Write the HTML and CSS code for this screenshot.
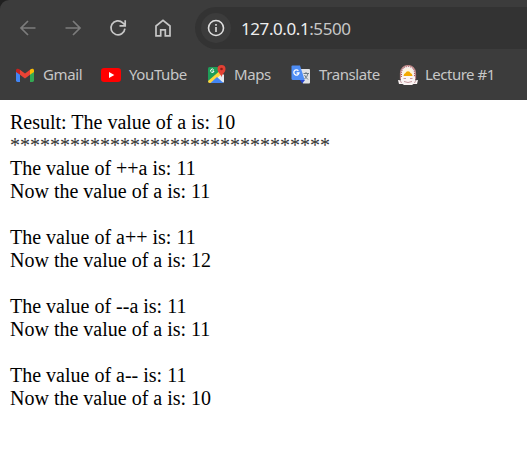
FILE: index.html
```html
<!DOCTYPE html>
<html lang="en">
<head>
<meta charset="utf-8">
<title>127.0.0.1:5500</title>
<link rel="stylesheet" href="styles.css">
</head>
<body>
<div class="corner">
<header class="chrome">
  <nav class="toolbar">
    <svg class="tool dim" viewBox="0 0 18 18"><path d="M16.5 9H2M9 2L2 9l7 7"/></svg>
    <svg class="tool dim" viewBox="0 0 18 18"><path d="M1.5 9H16M9 2l7 7-7 7"/></svg>
    <svg class="tool" viewBox="0 0 18 18"><path d="M15.9 9.6a7 7 0 1 1-2.1-5.8L16 6M16.2 1.3v5.6H10.5"/></svg>
    <svg class="tool" viewBox="0 0 18 18"><path d="M2 7l7-5.6L16 7v9.9h-4.7v-6.1H6.7v6.1H2z"/></svg>
    <div class="address">
      <span class="info"><svg viewBox="0 0 18 18"><circle cx="9" cy="9" r="7.5"/><path d="M9 8v5M9 5v1.7"/></svg></span>
      <span class="url">127.0.0.1<span class="port">:5500</span></span>
    </div>
  </nav>
  <div class="bookmarks">
    <a class="bookmark gmail">
      <svg viewBox="0 0 20 20"><path fill="#4285f4" d="M0 6l4 3v8H1.4Q0 17 0 15.6z"/><path fill="#34a853" d="M14 9l4-3v9.6q0 1.4-1.4 1.4H14z"/><path fill="#ea4335" d="M4 4.7l5 3.9 5-3.9v5l-5 3.8-5-3.8z"/><path fill="#c5221f" d="M0 7V5.5C0 3.3 2.3 3.3 4 4.7v5z"/><path fill="#fbbc04" d="M14 4.7c1.7-1.4 4-1.4 4 .8V7l-4 2.7z"/></svg>
      <span>Gmail</span>
    </a>
    <a class="bookmark youtube">
      <svg viewBox="0 0 20 20"><rect x="0" y="3" width="20" height="14" rx="3.2" fill="#f00"/><path fill="#fff" d="M8 7l5.3 3L8 13z"/></svg>
      <span>YouTube</span>
    </a>
    <a class="bookmark maps">
      <svg viewBox="0 0 20 20"><path fill="#e8eaed" d="M7 10l5-4 4 4v7.5H7z"/><path fill="#1f9d58" d="M1.5 2H11l2.2 5L1 17.5l-1-1v-13Q0 2 1.5 2z"/><path fill="#ffd43b" d="M0 16l11-9.5L13.5 9 4 18H1.500Q0 18 0 16z"/><path fill="#4285f4" d="M2.500 18L9 12l6.500 6z"/><path fill="none" stroke="#fff" d="M5.600 4.600A1.700 1.700 0 1 0 6 6H4.400"/><path fill="#e34133" d="M13.500 0a4 4 0 0 1 4 4c0 4-3.300 4.200-4 8.500C12.800 8.200 9.500 8 9.500 4a4 4 0 0 1 4-4z"/><circle cx="13.500" cy="4" r="1.300" fill="#8d1c18"/></svg>
      <span>Maps</span>
    </a>
    <a class="bookmark translate">
      <svg viewBox="0 0 20 20"><path fill="#e0e2e5" d="M8 4h10q1 0 1 1v12.500q0 1-1 1h-6z"/><path fill="#2745c9" d="M9 15h5l-2.700 3.400z"/><path fill="#4e8df5" d="M1.500.5H9L13.700 15H2q-1.500 0-1.500-1.500v-12Q.5.5 1.500.5z"/><path fill="none" stroke="#fff" stroke-width="1.3" d="M7.400 5.800A2.600 2.600 0 1 0 8 8H5.600"/><path fill="none" stroke="#687985" stroke-width="1" d="M12.500 8.500H18M15 7v1.500M17 8.500q-1 4-3.500 5.500M13.500 10q1.500 3 3.500 4.500"/></svg>
      <span>Translate</span>
    </a>
    <a class="bookmark lecture">
      <svg viewBox="0 0 20 20"><path fill="#f5eeee" stroke="#ba8585" stroke-width="1.2" d="M2.500 14V8a7.500 7.500 0 0 1 15 0v6z"/><path fill="none" stroke="#a95056" stroke-dasharray="1 1" d="M3.500 12V8a6.500 6.500 0 0 1 13 0v4"/><circle cx="10" cy="8" r="4.800" fill="#fff4dc"/><path fill="#f3a900" d="M5.500 11q.3-2.500 2-3Q8 6.300 10 6.300T12.500 8q1.700.5 2 3z"/><path fill="#fbf4f4" d="M0 15l3 .5V12l4-1h6l4 1v3.500l3-.5-1 4h-3.500L14 20H6l-1.500-1H1z"/><path fill="none" stroke="#b68086" stroke-width=".8" d="M5.500 13.500H8m4 0h2.500M6 16.500q4 2 8 0M2 16.500l2 1m12 0l2-1"/></svg>
      <span>Lecture #1</span>
    </a>
  </div>
</header>
</div>
<main class="output">
<p>Result: The value of a is: 10<br><span class="stars">********************************</span><br>The value of ++a is: 11<br>Now the value of a is: 11</p>
<p>The value of a++ is: 11<br>Now the value of a is: 12</p>
<p>The value of --a is: 11<br>Now the value of a is: 11</p>
<p>The value of a-- is: 11<br>Now the value of a is: 10</p>
</main>
</body>
</html>
```
FILE: styles.css
```css
* { box-sizing: border-box; }
body { margin: 0; background: #fff; overflow: hidden; }
.corner { background: #202020; }
.chrome {
  height: 100px;
  padding-top: 7px;
  background: #3c3c3c;
  border-top-left-radius: 9px;
  font-family: "Noto Sans", sans-serif;
}
.toolbar { display: flex; align-items: center; height: 42px; padding-left: 19px; }
.tool {
  width: 18px;
  height: 18px;
  margin-right: 27px;
  fill: none;
  stroke: #c7c7c7;
  stroke-width: 1.7;
}
.tool.dim { stroke: #7c7c7c; }
.tool:nth-child(4) { margin-right: 23px; }
.address {
  display: flex;
  align-items: center;
  flex: 1;
  height: 42px;
  padding-left: 6px;
  background: #333;
  border-radius: 21px 0 0 21px;
}
.info {
  display: flex;
  align-items: center;
  justify-content: center;
  width: 30px;
  height: 30px;
  margin-right: 10px;
  border-radius: 50%;
  background: #3c3c3c;
}
.info svg { width: 18px; height: 18px; fill: none; stroke: #dedede; stroke-width: 1.6; }
.url { color: #eee; font-size: 17px; letter-spacing: -.42px; }
.port { color: #c7c7c7; }
.bookmarks {
  display: grid;
  grid-template-columns: 85px 107px 83px 107px 1fr;
  height: 51px;
  padding-left: 16px;
}
.bookmark {
  display: flex;
  align-items: center;
  gap: 7px;
  color: #c7c7c7;
  font-size: 15px;
  letter-spacing: -.4px;
  white-space: nowrap;
}
.bookmark span { padding-bottom: 2px; }
.youtube, .translate { gap: 8px; }
.maps { gap: 6px; }
.lecture { letter-spacing: -.5px; }
.bookmark svg { width: 20px; height: 20px; flex: none; }
.output {
  padding: 11px 10px;
  color: #000;
  font: 20px/23px "Liberation Serif", serif;
}
.output p { margin: 0 0 23px; }
.stars { color: #333; }
```
